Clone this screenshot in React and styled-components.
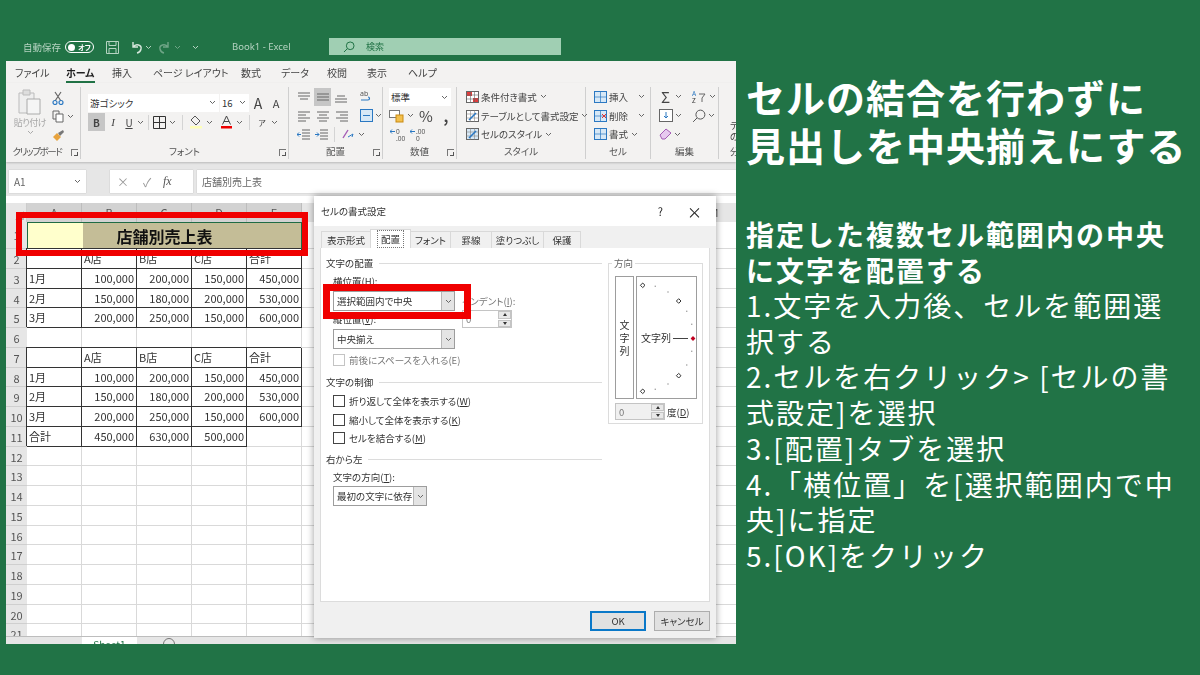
import styled, { createGlobalStyle } from "styled-components";

const GlobalStyle = createGlobalStyle`
  html, body { margin: 0; padding: 0; background: #217346; }
  body { font-family: "Noto Sans CJK JP", "Noto Sans", sans-serif; }
  * { box-sizing: border-box; }
`;

const Page = styled.div`
  width: 1200px;
  height: 675px;
  background: #217346;
  display: flex;
  align-items: flex-start;
  padding: 38px 0 0 6px;
  overflow: hidden;
`;

const ExcelWindow = styled.div`
  position: relative;
  width: 730px;
  height: 606px;
  flex: none;
  display: flex;
  flex-direction: column;
  overflow: hidden;
  font-feature-settings: "palt";
  color: #333;
  filter: blur(0.3px);
`;

/* title bar */
const TitleBar = styled.div`
  height: 23px;
  flex: none;
  display: flex;
  align-items: flex-start;
  padding-left: 17px;
  color: #b5d3c1;
  font-size: 9.5px;
  line-height: 18px;
`;

const QuickTools = styled.div`
  width: 209px;
  height: 18px;
  display: flex;
  align-items: center;
`;

const Toggle = styled.span`
  width: 29px;
  height: 12px;
  margin-left: 4px;
  border: 1px solid #fff;
  border-radius: 6px;
  display: flex;
  align-items: center;
  padding-left: 2px;
  color: #fff;
  font-size: 7px;
  line-height: 10px;
  font-weight: 700;
  &::before {
    content: "";
    width: 7px;
    height: 7px;
    border-radius: 50%;
    background: #fff;
    margin-right: 3px;
  }
`;

const BookName = styled.span`
  width: 97px;
  font-family: "Noto Sans", sans-serif;
  font-size: 9.5px;
`;

const SearchBox = styled.div`
  width: 232px;
  height: 17px;
  background: #a0cfb3;
  display: flex;
  align-items: center;
  padding-left: 14px;
  color: #217346;
  font-size: 9px;
  gap: 11px;
`;

/* ribbon tabs */
const RibbonTabs = styled.div`
  height: 22px;
  flex: none;
  background: #f3f2f1;
  display: flex;
  padding-left: 9px;
  font-size: 10px;
  line-height: 24px;
`;

const RibbonTab = styled.div`
  width: ${(p) => p.$w}px;
  flex: none;
  & > span {
    display: inline-block;
    height: 22px;
    color: ${(p) => (p.$on ? "#1f1f1f" : "#444")};
    font-weight: ${(p) => (p.$on ? 700 : 400)};
    border-bottom: ${(p) => (p.$on ? "2px solid #217346" : "none")};
  }
`;

/* ribbon */
const Ribbon = styled.div`
  height: 79px;
  flex: none;
  background: #f3f2f1;
  display: flex;
  padding: 4px 0 3px;
  box-shadow: 0 1px 2px rgba(0, 0, 0, 0.2);
  position: relative;
  overflow: hidden;
`;

const Group = styled.div`
  width: ${(p) => p.$w}px;
  flex: none;
  position: relative;
  display: flex;
  flex-direction: column;
  border-right: 1px solid ${(p) => (p.$last ? "transparent" : "#cfcfcf")};
`;

const GroupBody = styled.div`
  flex: 1;
  min-height: 0;
  display: flex;
  flex-direction: ${(p) => p.$dir || "column"};
  padding: ${(p) => p.$pad || "0"};
`;

const GroupLabel = styled.div`
  height: 15px;
  flex: none;
  text-align: center;
  font-size: 9.5px;
  line-height: 15px;
  color: #555;
  white-space: nowrap;
  padding-right: ${(p) => p.$right || 0}px;
  letter-spacing: ${(p) => p.$track || 0}px;
`;

const Launcher = styled.span`
  position: absolute;
  right: 2px;
  bottom: 3px;
  width: 7px;
  height: 7px;
  border-left: 1px solid #777;
  border-top: 1px solid #777;
  &::after {
    content: "";
    position: absolute;
    right: 0;
    bottom: 0;
    width: 3px;
    height: 3px;
    border-right: 1px solid #555;
    border-bottom: 1px solid #555;
  }
`;

const ToolRow = styled.div`
  height: ${(p) => p.$h || 19}px;
  display: flex;
  align-items: center;
  gap: ${(p) => p.$gap || 0}px;
  padding-left: ${(p) => p.$left || 0}px;
  font-size: 9.5px;
  white-space: nowrap;
  color: #444;
`;

const Spot = styled.span`
  width: ${(p) => p.$w || 17}px;
  height: ${(p) => p.$h || 18}px;
  flex: none;
  display: flex;
  align-items: center;
  justify-content: center;
  background: ${(p) => (p.$on ? "#c6c6c6" : "transparent")};
  font-size: ${(p) => p.$size || 10}px;
  font-weight: ${(p) => p.$weight || 400};
  font-style: ${(p) => (p.$italic ? "italic" : "normal")};
  text-decoration: ${(p) => (p.$under ? "underline" : "none")};
  color: ${(p) => p.$color || "#444"};
  font-family: ${(p) => (p.$latin ? '"Liberation Serif", serif' : "inherit")};
`;

const FieldBox = styled.div`
  width: ${(p) => p.$w}px;
  height: 18px;
  flex: none;
  margin-left: ${(p) => p.$ml || 0}px;
  background: #fff;
  display: flex;
  align-items: center;
  justify-content: space-between;
  padding: 0 3px 0 2px;
  font-size: 9.5px;
  color: #333;
`;

const PasteBlock = styled.div`
  width: 36px;
  margin-left: 6px;
  display: flex;
  flex-direction: column;
  align-items: center;
  color: #a6a6a6;
  font-size: 9px;
  line-height: 11px;
  padding-top: 2px;
  gap: 2px;
  white-space: nowrap;
  letter-spacing: -0.5px;
`;

const ClipTools = styled.div`
  display: flex;
  flex-direction: column;
  padding: 1px 0 0 4px;
`;

const Sep = styled.span`
  width: 1px;
  height: 15px;
  flex: none;
  background: #d4d4d4;
  margin: 0 ${(p) => p.$m || 3}px;
`;

const Gap = styled.span`
  width: ${(p) => p.$w}px;
  flex: none;
`;

const ClippedText = styled.div`
  padding: 33px 0 0 11px;
  flex: 1;
  font-size: 9.5px;
  line-height: 11px;
  color: #444;
`;

const ClippedLabel = styled.div`
  height: 15px;
  padding-left: 11px;
  font-size: 9.5px;
  line-height: 15px;
  color: #555;
`;

/* formula bar */
const FormulaBar = styled.div`
  height: 34px;
  flex: none;
  background: #e6e6e6;
  display: flex;
  gap: 4px;
  padding: 8px 0 3px 3px;
  font-size: 10px;
  color: #666;
`;

const FormulaBox = styled.div`
  width: ${(p) => p.$w || 0}px;
  flex: ${(p) => (p.$grow ? 1 : "none")};
  margin-left: ${(p) => p.$ml || 0}px;
  background: #fff;
  box-shadow: 0 0 1px rgba(0, 0, 0, 0.25);
  display: flex;
  align-items: center;
  justify-content: ${(p) => (p.$spread ? "space-between" : "flex-start")};
  gap: ${(p) => p.$gap || 0}px;
  padding: 0 5px;
`;

const FormulaMark = styled.span`
  color: #9a9a9a;
  font-size: 12px;
  width: ${(p) => p.$w || 16}px;
  text-align: center;
  flex: none;
`;

const FxMark = styled.span`
  font-style: italic;
  font-family: "Liberation Serif", serif;
  font-size: 12px;
  color: #555;
`;

/* sheet */
const SheetArea = styled.div`
  flex: 1;
  min-height: 0;
  background: #fff;
  padding-top: 7px;
  overflow: hidden;
`;

const SheetGrid = styled.div`
  display: grid;
  grid-template-columns: 21px repeat(13, 55px);
  grid-template-rows: 19px 27px repeat(21, 19.75px);
  font-size: 11px;
`;

const Corner = styled.div`
  background: #e6e6e6;
  border-right: 1px solid #ccc;
  display: flex;
  align-items: flex-end;
  justify-content: flex-end;
  padding: 2px;
  &::after {
    content: "";
    width: 0;
    height: 0;
    border-left: 9px solid transparent;
    border-bottom: 9px solid #b5b5b5;
  }
`;

const ColHead = styled.div`
  background: ${(p) => (p.$on ? "#d2d2d2" : "#e6e6e6")};
  border-right: 1px solid #bdbdbd;
  text-align: center;
  line-height: 19px;
  color: #555;
`;

const RowHead = styled.div`
  background: #e6e6e6;
  border-bottom: 1px solid #cfcfcf;
  text-align: center;
  color: #555;
  line-height: ${(p) => p.$line || 20}px;
`;

const Cell = styled.div`
  border-right: 1px solid ${(p) => (p.$box ? "#333" : "#d9d9d9")};
  border-bottom: 1px solid ${(p) => (p.$box ? "#333" : "#d9d9d9")};
  box-shadow: ${(p) => (p.$box ? "-1px -1px 0 #333" : "none")};
  padding: 0 2px;
  line-height: 19px;
  text-align: ${(p) => (p.$num ? "right" : "left")};
  color: #333;
  white-space: nowrap;
  overflow: hidden;
`;

const TitleCell = styled.div`
  grid-column: span 5;
  background: linear-gradient(90deg, #ffffcc 20%, #c4bd97 20%);
  border: 1px solid #1f6b44;
  display: flex;
  align-items: center;
  justify-content: center;
  font-size: 16px;
  font-weight: 700;
  color: #111;
`;

const SheetTabs = styled.div`
  height: 8px;
  flex: none;
  background: #e6e6e6;
  border-top: 1px solid #bdbdbd;
  display: flex;
  padding-left: 76px;
  overflow: hidden;
  font-size: 10px;
`;

const SheetTab = styled.div`
  width: 55px;
  height: 12px;
  background: #fff;
  text-align: center;
  line-height: 19px;
  color: #217346;
  margin-top: -2px;
`;

const AddSheet = styled.span`
  width: 12px;
  height: 12px;
  margin: 1px 0 0 26px;
  border: 1px solid #777;
  border-radius: 50%;
`;

const RedFrame = styled.div`
  position: absolute;
  left: ${(p) => p.$x}px;
  top: ${(p) => p.$y}px;
  width: ${(p) => p.$w}px;
  height: ${(p) => p.$h}px;
  border: ${(p) => p.$t || 6}px solid #f00000;
  pointer-events: none;
  z-index: 3;
`;

/* dialog */
const Dialog = styled.div`
  position: absolute;
  left: 308px;
  top: 158px;
  width: 402px;
  height: 442px;
  background: #f0f0f0;
  box-shadow: 0 0 7px rgba(0, 0, 0, 0.4);
  display: flex;
  flex-direction: column;
  font-size: 9.5px;
  color: #333;
  font-feature-settings: "palt";
  z-index: 2;
`;

const DialogTitle = styled.div`
  height: 30px;
  flex: none;
  background: #fff;
  display: flex;
  align-items: center;
  padding: 0 14px 0 7px;
  font-size: 9.5px;
  & > b {
    flex: 1;
    font-weight: 400;
  }
`;

const TitleButton = styled.span`
  margin-left: ${(p) => p.$ml || 0}px;
  font-size: ${(p) => p.$size || 11}px;
  color: #222;
`;

const DialogTabs = styled.div`
  height: 22px;
  flex: none;
  display: flex;
  align-items: flex-end;
  padding-left: 8px;
`;

const DialogTab = styled.div`
  width: ${(p) => p.$w}px;
  height: ${(p) => (p.$on ? 19 : 17)}px;
  flex: none;
  display: flex;
  align-items: center;
  justify-content: center;
  background: ${(p) => (p.$on ? "#fff" : "#f0f0f0")};
  border: 1px solid #d9d9d9;
  border-bottom: none;
  margin-left: -1px;
  white-space: nowrap;
  & > span {
    padding: 1px 3px;
    outline: ${(p) => (p.$on ? "1px dotted #777" : "none")};
  }
`;

const DialogPanel = styled.div`
  flex: 1;
  min-height: 0;
  margin: 0 6px;
  background: #fff;
  border: 1px solid #dcdcdc;
  border-top: none;
  display: flex;
  padding-left: 5px;
`;

const LeftColumn = styled.div`
  width: 276px;
  flex: none;
`;

const SectionTitle = styled.div`
  height: 16px;
  margin-top: ${(p) => p.$mt || 0}px;
  display: flex;
  align-items: center;
  gap: 6px;
  &::after {
    content: "";
    flex: 1;
    height: 1px;
    background: #dcdcdc;
  }
`;

const Indented = styled.div`
  padding-left: 7px;
`;

const FieldLabel = styled.div`
  height: 16px;
  line-height: 16px;
  margin-top: ${(p) => p.$mt || 0}px;
  color: ${(p) => (p.$dim ? "#777" : "#333")};
  white-space: nowrap;
`;

const SelectBox = styled.div`
  width: ${(p) => p.$w}px;
  height: 20px;
  margin-top: ${(p) => p.$mt || 0}px;
  background: #fff;
  border: 1px solid #9d9d9d;
  display: flex;
  align-items: center;
  justify-content: space-between;
  padding-left: 3px;
  font-size: 9.5px;
`;

const SelectArrow = styled.span`
  width: 13px;
  height: 18px;
  background: #e4e4e4;
  border-left: 1px solid #b8b8b8;
  display: flex;
  align-items: center;
  justify-content: center;
`;

const AlignRow = styled.div`
  display: flex;
  margin-top: 2px;
`;

const AlignSelects = styled.div`
  width: 129px;
  flex: none;
`;

const SpinBox = styled.div`
  width: ${(p) => p.$w}px;
  height: ${(p) => p.$h || 18}px;
  margin-top: ${(p) => p.$mt || 0}px;
  background: ${(p) => (p.$dim ? "#f0f0f0" : "#fff")};
  border: 1px solid #c4c4c4;
  display: flex;
  align-items: center;
  justify-content: space-between;
  padding-left: 3px;
  color: #777;
  flex: none;
`;

const SpinButtons = styled.span`
  width: 13px;
  height: 100%;
  display: flex;
  flex-direction: column;
  gap: 1px;
  & > i {
    flex: 1;
    background: #e8e8e8;
    border: 1px solid #c4c4c4;
    display: flex;
    align-items: center;
    justify-content: center;
    &::after {
      content: "";
      border-left: 2px solid transparent;
      border-right: 2px solid transparent;
      border-bottom: 3px solid #333;
    }
  }
  & > i + i::after {
    border-bottom: none;
    border-top: 3px solid #333;
  }
`;

const CheckRow = styled.div`
  height: 16px;
  margin-top: ${(p) => p.$mt || 2.5}px;
  display: flex;
  align-items: center;
  gap: 4px;
  color: ${(p) => (p.$dim ? "#777" : "#333")};
  white-space: nowrap;
  &::before {
    content: "";
    width: 10px;
    height: 10px;
    flex: none;
    background: #fff;
    border: 1px solid ${(p) => (p.$dim ? "#c4c4c4" : "#444")};
  }
`;

const OrientColumn = styled.div`
  width: 95px;
  height: 161px;
  margin: 15px 0 0 6px;
  border: 1px solid #dcdcdc;
  position: relative;
  padding: 12px 0 0 6px;
`;

const OrientLegend = styled.span`
  position: absolute;
  top: -7px;
  left: 3px;
  padding: 0 2px;
  background: #fff;
  line-height: 13px;
  color: #666;
`;

const OrientBoxes = styled.div`
  display: flex;
  gap: 2px;
`;

const VerticalBox = styled.div`
  width: 19px;
  height: 123px;
  border: 1px solid #9d9d9d;
  display: flex;
  align-items: center;
  justify-content: center;
  text-align: center;
  line-height: 13px;
  font-size: 10px;
`;

const DialBox = styled.div`
  width: 61px;
  height: 123px;
  border: 1px solid #9d9d9d;
  display: flex;
`;

const DegreeRow = styled.div`
  display: flex;
  align-items: center;
  gap: 2px;
  margin-top: 4px;
  white-space: nowrap;
`;

const DialogFooter = styled.div`
  height: 36px;
  flex: none;
  display: flex;
  justify-content: flex-end;
  gap: 8px;
  padding: 9px 6px 0 0;
`;

const DialogButton = styled.div`
  width: 56px;
  height: 20px;
  background: #e1e1e1;
  border: ${(p) => (p.$main ? "2px solid #0a78c8" : "1px solid #adadad")};
  display: flex;
  align-items: center;
  justify-content: center;
`;

/* right text */
const Notes = styled.div`
  width: 440px;
  margin-left: 10px;
  padding-top: 34px;
  color: #fff;
  flex: none;
`;

const Headline = styled.h1`
  margin: 0;
  font-size: 39px;
  letter-spacing: 1px;
  line-height: 48px;
  font-weight: 700;
  white-space: nowrap;
`;

const SubHead = styled.h2`
  margin: 48px 0 0;
  font-size: 28px;
  letter-spacing: 2px;
  line-height: 36px;
  font-weight: 700;
`;

const Step = styled.div`
  font-size: 28px;
  letter-spacing: 2px;
  line-height: 35.7px;
`;

/* icons */
const Chev = ({ c = "#666", ml = 0 }) => (
  <svg width="7" height="5" viewBox="0 0 7 5" style={{ marginLeft: ml, flex: "none" }}>
    <path d="M1 1l2.5 2.5L6 1" fill="none" stroke={c} strokeWidth="1" />
  </svg>
);

const Ico = ({ w = 14, h = 14, children, ml = 0 }) => (
  <svg width={w} height={h} viewBox={`0 0 ${w} ${h}`} style={{ flex: "none", marginLeft: ml }}>
    {children}
  </svg>
);

const Lines = ({ rows }) => (
  <Ico w={14} h={14}>
    {rows.map(([x1, x2, y], i) => (
      <path key={i} d={`M${x1} ${y}H${x2}`} stroke="#666" strokeWidth="1" />
    ))}
  </Ico>
);

const SaveIcon = () => (
  <Ico w={13} h={13} ml={12}>
    <path d="M.5.5h12v12H.5zM3 .5v4h7v-4M3 12.5v-5h7v5" fill="none" stroke="#b5d3c1" />
  </Ico>
);

const UndoIcon = ({ c, flip }) => (
  <svg width="14" height="13" viewBox="0 0 14 13" style={{ flex: "none", transform: flip ? "scaleX(-1)" : "none" }}>
    <path d="M4 1v5h5M4 6c3-4 9-2 8 2-.4 2-2 3.5-4 4" fill="none" stroke={c} strokeWidth="1.4" />
  </svg>
);

const PasteIcon = () => (
  <Ico w={24} h={26}>
    <path d="M1 4h15v20H1z" fill="#eee" stroke="#bbb" />
    <path d="M5 1h7v5H5z" fill="#ddd" stroke="#bbb" />
    <path d="M9 10h13v15H9z" fill="#f5f5f5" stroke="#aaa" />
  </Ico>
);

const ScissorsIcon = () => (
  <Ico w={12} h={14}>
    <path d="M3 1l6 9M9 1L3 10" stroke="#666" strokeWidth="1.2" fill="none" />
    <circle cx="3" cy="11.5" r="2" fill="none" stroke="#2b78c2" strokeWidth="1.2" />
    <circle cx="9" cy="11.5" r="2" fill="none" stroke="#2b78c2" strokeWidth="1.2" />
  </Ico>
);

const CopyIcon = () => (
  <Ico w={12} h={13}>
    <path d="M1 1h6v8H1z" fill="none" stroke="#666" />
    <path d="M4 4h7v8H4z" fill="#fff" stroke="#666" />
  </Ico>
);

const PainterIcon = () => (
  <Ico w={13} h={12}>
    <path d="M1 8l4-4 4 4-4 4z" fill="#e8a33d" />
    <path d="M6 4l5-3 1 2-4 4z" fill="#777" />
  </Ico>
);

const BorderIcon = () => (
  <Ico w={13} h={13}>
    <path d="M.5.5h12v12H.5zM6.5.5v12M.5 6.5h12" fill="none" stroke="#333" />
  </Ico>
);

const FillIcon = () => (
  <Ico w={14} h={14}>
    <path d="M6 1l5 5-4 4-5-5z" fill="none" stroke="#555" />
    <rect x="1" y="11" width="12" height="2.5" fill="#ffffb8" />
  </Ico>
);

const FontColorIcon = () => (
  <Ico w={13} h={14}>
    <path d="M2.5 9.5L6.5 1l4 8.5M4 6.5h5" fill="none" stroke="#444" />
    <rect x="1" y="11" width="11" height="2.5" fill="#e00" />
  </Ico>
);

const WrapIcon = () => (
  <Ico w={14} h={15}>
    <text x="2" y="7" fontSize="7" fill="#555" fontFamily="Noto Sans">ab</text>
    <path d="M3 11h7c2 0 2-3 0-3" fill="none" stroke="#2b78c2" strokeWidth="1.2" />
  </Ico>
);

const MergeIcon = () => (
  <Ico w={13} h={13}>
    <rect x=".5" y=".5" width="12" height="12" fill="#d7e8f6" stroke="#2b78c2" />
    <path d="M3 6.5h7" stroke="#2b78c2" />
  </Ico>
);

const IndentIcon = ({ rev }) => (
  <Ico w={13} h={13}>
    <path d="M5 2h8M5 5h8M5 8h8M5 11h8" stroke="#666" />
    <path d={rev ? "M4 6.5H0l2-2M0 6.5l2 2" : "M0 6.5h4l-2-2M4 6.5l-2 2"} fill="none" stroke="#2b78c2" />
  </Ico>
);

const OrientIcon = () => (
  <Ico w={14} h={13}>
    <path d="M2 10l5-8" stroke="#a35ab5" strokeWidth="1.4" />
    <path d="M7 9l5-3-1 3" fill="none" stroke="#2b78c2" />
  </Ico>
);

const TableMini = ({ accent, bg = "#fff" }) => (
  <Ico w={13} h={12}>
    <rect x=".5" y=".5" width="12" height="11" fill={bg} stroke="#666" />
    <path d="M.5 4h12M.5 8h12M4.5.5v11M8.5.5v11" stroke="#888" strokeWidth=".6" />
    <path d="M3 10l7-7" stroke={accent} strokeWidth="1.6" />
  </Ico>
);

const CondIcon = () => (
  <Ico w={13} h={12}>
    <rect x=".5" y=".5" width="12" height="11" fill="#fff" stroke="#666" />
    <rect x="1" y="1" width="5" height="4" fill="#e23b3b" />
    <rect x="7" y="7" width="5" height="4" fill="#e23b3b" />
    <path d="M.5 4h12M.5 8h12M4.5.5v11M8.5.5v11" stroke="#666" strokeWidth=".6" />
  </Ico>
);

const CellOp = ({ mark }) => (
  <Ico w={13} h={12}>
    <rect x=".5" y=".5" width="12" height="11" fill="#d7e8f6" stroke="#2b78c2" />
    <path d="M.5 6h12M6.5.5v11" stroke="#2b78c2" strokeWidth=".7" />
    {mark && <path d="M8 4l4 4M12 4l-4 4" stroke="#d33" />}
  </Ico>
);

const SearchIcon = ({ c = "#555", w = 12 }) => (
  <Ico w={w} h={w}>
    <circle cx={w * 0.6} cy={w * 0.4} r={w * 0.32} fill="none" stroke={c} />
    <path d={`M${w * 0.36} ${w * 0.64}L${w * 0.08} ${w * 0.92}`} stroke={c} />
  </Ico>
);

const EraserIcon = () => (
  <Ico w={13} h={12}>
    <path d="M1 7l6-6 5 4-6 6H3z" fill="#e7c9ef" stroke="#a35ab5" />
  </Ico>
);

const FillDownIcon = () => (
  <Ico w={14} h={13}>
    <rect x=".5" y=".5" width="13" height="12" fill="#fff" stroke="#666" />
    <path d="M7 3v6M5 7l2 2 2-2" fill="none" stroke="#2b78c2" />
  </Ico>
);

const SortIcon = () => (
  <Ico w={15} h={14}>
    <text x="1" y="6" fontSize="6.5" fill="#2b78c2" fontFamily="Noto Sans">A</text>
    <text x="1" y="13" fontSize="6.5" fill="#333" fontFamily="Noto Sans">Z</text>
    <path d="M8 4h6l-3 4v4" fill="none" stroke="#666" />
  </Ico>
);

const DecimalIcon = ({ a, b }) => (
  <Ico w={16} h={14}>
    <text x="6" y="6" fontSize="6.5" fill="#555" fontFamily="Noto Sans">{a}</text>
    <text x="6" y="13" fontSize="6.5" fill="#555" fontFamily="Noto Sans">{b}</text>
    <path d="M0 3.5h5M0 3.5l2-2M0 3.5l2 2" fill="none" stroke="#2b78c2" />
  </Ico>
);

const CurrencyIcon = () => (
  <Ico w={15} h={14}>
    <rect x=".5" y="1.5" width="10" height="7" fill="#fff" stroke="#777" />
    <rect x="7" y="6" width="7" height="7" fill="#f3c04d" stroke="#c98a12" />
  </Ico>
);

const DialGraphic = () => {
  const diamonds = [[5.7, 8.3], [41.7, 24], [41.7, 98.7], [5.7, 114.3]];
  const dots = [[18.3, 9.3], [31, 15], [49.7, 34.3], [54.7, 47.3], [54.7, 74.3], [49.7, 88], [31, 107], [18.3, 112.3]];
  return (
    <svg width="59" height="121" viewBox="0 0 59 121">
      {dots.map(([x, y]) => (
        <rect key={`${x}-${y}`} x={x - 0.7} y={y - 0.7} width="1.4" height="1.4" fill="#aaa" />
      ))}
      {diamonds.map(([x, y]) => (
        <path key={`${x}-${y}`} d={`M${x} ${y - 2.3}l2.3 2.3-2.3 2.3-2.3-2.3z`} fill="#fff" stroke="#333" />
      ))}
      <path d="M36 61.5h15" stroke="#444" />
      <path d="M56 59l2.4 2.5-2.4 2.5-2.4-2.5z" fill="#c00020" />
      <text x="4" y="65" fontSize="10" fill="#333" fontFamily="Noto Sans CJK JP">文字列</text>
    </svg>
  );
};

/* data */
const ribbonTabs = [
  ["ファイル", 51],
  ["ホーム", 46, true],
  ["挿入", 41],
  ["ページ レイアウト", 88],
  ["数式", 40],
  ["データ", 46],
  ["校閲", 40],
  ["表示", 41],
  ["ヘルプ", 40],
];

const columns = ["A", "B", "C", "D", "E", "F", "G", "H", "I", "J", "K", "L", "M"];
const yen = (n) => n.toLocaleString("en-US");

const header = ["", "A店", "B店", "C店", "合計"];
const months = [
  ["1月", 100000, 200000, 150000, 450000],
  ["2月", 150000, 180000, 200000, 530000],
  ["3月", 200000, 250000, 150000, 600000],
];
const total = ["合計", 450000, 630000, 500000, ""];

const sheetRows = [
  { n: 2, cells: header },
  { n: 3, cells: months[0] },
  { n: 4, cells: months[1] },
  { n: 5, cells: months[2] },
  { n: 6 },
  { n: 7, cells: header },
  { n: 8, cells: months[0] },
  { n: 9, cells: months[1] },
  { n: 10, cells: months[2] },
  { n: 11, cells: total, open: true },
  ...Array.from({ length: 11 }, (_, i) => ({ n: 12 + i })),
];

const dialogTabs = [
  ["表示形式", 50],
  ["配置", 41, true],
  ["フォント", 41],
  ["罫線", 42],
  ["塗りつぶし", 53],
  ["保護", 38],
];

function SheetRow({ row }) {
  return (
    <>
      <RowHead>{row.n}</RowHead>
      {columns.map((col, i) => {
        const value = row.cells ? row.cells[i] : undefined;
        const boxed = row.cells && i < 5 && !(row.open && i === 4);
        const isNum = typeof value === "number";
        return (
          <Cell key={col} $box={boxed} $num={isNum}>
            {isNum ? yen(value) : value}
          </Cell>
        );
      })}
    </>
  );
}

function CellFormat() {
  return (
    <Dialog>
      <DialogTitle>
        <b>セルの書式設定</b>
        <TitleButton>?</TitleButton>
        <TitleButton $ml={24} $size={15}>×</TitleButton>
      </DialogTitle>
      <DialogTabs>
        {dialogTabs.map(([label, w, on]) => (
          <DialogTab key={label} $w={w} $on={on}>
            <span>{label}</span>
          </DialogTab>
        ))}
      </DialogTabs>
      <DialogPanel>
        <LeftColumn>
          <SectionTitle $mt={7}>文字の配置</SectionTitle>
          <Indented>
            <FieldLabel $mt={2}>横位置(<u>H</u>):</FieldLabel>
            <AlignRow>
              <AlignSelects>
                <SelectBox $w={122}>
                  選択範囲内で中央
                  <SelectArrow><Chev /></SelectArrow>
                </SelectBox>
                <FieldLabel>縦位置(<u>V</u>):</FieldLabel>
                <SelectBox $w={122} $mt={2}>
                  中央揃え
                  <SelectArrow><Chev /></SelectArrow>
                </SelectBox>
                <CheckRow $dim $mt={3}><span>前後にスペースを入れる(E)</span></CheckRow>
              </AlignSelects>
              <div>
                <FieldLabel $mt={2} $dim>インデント(<u>I</u>):</FieldLabel>
                <SpinBox $w={50} $mt={1}>
                  0
                  <SpinButtons><i /><i /></SpinButtons>
                </SpinBox>
              </div>
            </AlignRow>
          </Indented>
          <SectionTitle $mt={6}>文字の制御</SectionTitle>
          <Indented>
            <CheckRow $mt={3}><span>折り返して全体を表示する(<u>W</u>)</span></CheckRow>
            <CheckRow><span>縮小して全体を表示する(<u>K</u>)</span></CheckRow>
            <CheckRow><span>セルを結合する(<u>M</u>)</span></CheckRow>
          </Indented>
          <SectionTitle $mt={5}>右から左</SectionTitle>
          <Indented>
            <FieldLabel $mt={2}>文字の方向(<u>T</u>):</FieldLabel>
            <SelectBox $w={94} $mt={1}>
              最初の文字に依存
              <SelectArrow><Chev /></SelectArrow>
            </SelectBox>
          </Indented>
        </LeftColumn>
        <OrientColumn>
          <OrientLegend>方向</OrientLegend>
          <OrientBoxes>
            <VerticalBox>文<br />字<br />列</VerticalBox>
            <DialBox><DialGraphic /></DialBox>
          </OrientBoxes>
          <DegreeRow>
            <SpinBox $w={50} $h={17} $dim>
              0
              <SpinButtons><i /><i /></SpinButtons>
            </SpinBox>
            <span>度(<u>D</u>)</span>
          </DegreeRow>
        </OrientColumn>
      </DialogPanel>
      <DialogFooter>
        <DialogButton $main>OK</DialogButton>
        <DialogButton>キャンセル</DialogButton>
      </DialogFooter>
    </Dialog>
  );
}

export default function App() {
  return (
    <Page>
      <GlobalStyle />
      <ExcelWindow>
        <TitleBar>
          <QuickTools>
            自動保存
            <Toggle>オフ</Toggle>
            <SaveIcon />
            <Gap $w={10} />
            <UndoIcon c="#d6e7dc" />
            <Chev c="#b5d3c1" ml={2} />
            <Gap $w={6} />
            <UndoIcon c="#6fa587" flip />
            <Chev c="#6fa587" ml={2} />
            <Gap $w={11} />
            <Chev c="#b5d3c1" />
          </QuickTools>
          <BookName>Book1 - Excel</BookName>
          <SearchBox>
            <SearchIcon c="#217346" />
            検索
          </SearchBox>
        </TitleBar>

        <RibbonTabs>
          {ribbonTabs.map(([label, w, on]) => (
            <RibbonTab key={label} $w={w} $on={on}>
              <span>{label}</span>
            </RibbonTab>
          ))}
        </RibbonTabs>

        <Ribbon>
          <Group $w={75}>
            <GroupBody $dir="row">
              <PasteBlock>
                <PasteIcon />
                貼り付け
                <Chev c="#aaa" />
              </PasteBlock>
              <ClipTools>
                <ToolRow $h={19}><ScissorsIcon /></ToolRow>
                <ToolRow $h={19}><CopyIcon /><Chev ml={3} /></ToolRow>
                <ToolRow $h={18}><PainterIcon /></ToolRow>
              </ClipTools>
            </GroupBody>
            <GroupLabel $right={12} $track={-1.4}>クリップボード</GroupLabel>
            <Launcher />
          </Group>

          <Group $w={208}>
            <GroupBody $pad="6px 0 0 7px">
              <ToolRow $h={19}>
                <FieldBox $w={131}>游ゴシック<Chev /></FieldBox>
                <FieldBox $w={29} $ml={1}>16<Chev /></FieldBox>
                <Spot $w={18} $size={14}>A</Spot>
                <Spot $w={18} $size={11}>A</Spot>
              </ToolRow>
              <ToolRow $h={20}>
                <Spot $on $weight={700} $size={10}>B</Spot>
                <Spot $w={16} $italic $latin $size={11}>I</Spot>
                <Spot $w={16} $under $size={10}>U</Spot>
                <Chev />
                <Sep $m={4} />
                <BorderIcon />
                <Chev ml={3} />
                <Sep $m={6} />
                <FillIcon />
                <Chev ml={3} />
                <Gap $w={7} />
                <FontColorIcon />
                <Chev ml={3} />
                <Sep $m={6} />
                <Spot $w={12} $size={8}>ア</Spot>
                <Chev ml={3} />
              </ToolRow>
            </GroupBody>
            <GroupLabel>フォント</GroupLabel>
            <Launcher />
          </Group>

          <Group $w={94}>
            <GroupBody $pad="0 0 0 8px">
              <ToolRow $gap={3}>
                <Lines rows={[[1, 13, 3], [1, 13, 6], [3, 11, 9]]} />
                <Spot $on $w={17}><Lines rows={[[1, 13, 4], [1, 13, 7], [1, 13, 10]]} /></Spot>
                <Lines rows={[[3, 11, 6], [1, 13, 9], [1, 13, 12]]} />
                <Gap $w={4} />
                <WrapIcon />
              </ToolRow>
              <ToolRow $gap={5}>
                <Lines rows={[[1, 13, 3], [1, 9, 6], [1, 13, 9], [1, 9, 12]]} />
                <Lines rows={[[1, 13, 3], [3, 11, 6], [1, 13, 9], [3, 11, 12]]} />
                <Lines rows={[[1, 13, 3], [5, 13, 6], [1, 13, 9], [5, 13, 12]]} />
                <Gap $w={1} />
                <MergeIcon />
                <Chev ml={-3} />
              </ToolRow>
              <ToolRow $gap={5}>
                <IndentIcon rev />
                <IndentIcon />
                <Sep $m={1} />
                <OrientIcon />
                <Chev ml={-2} />
              </ToolRow>
            </GroupBody>
            <GroupLabel>配置</GroupLabel>
            <Launcher />
          </Group>

          <Group $w={74}>
            <GroupBody $pad="1px 0 0 6px">
              <ToolRow $h={18}>
                <FieldBox $w={62}>標準<Chev /></FieldBox>
              </ToolRow>
              <ToolRow>
                <CurrencyIcon />
                <Chev ml={3} />
                <Spot $w={24} $size={15}>%</Spot>
                <Spot $w={16} $size={15} $weight={700}>,</Spot>
              </ToolRow>
              <ToolRow $gap={4} $left={1}>
                <DecimalIcon a="0" b=".00" />
                <DecimalIcon a=".00" b="0" />
              </ToolRow>
            </GroupBody>
            <GroupLabel>数値</GroupLabel>
            <Launcher />
          </Group>

          <Group $w={129}>
            <GroupBody $pad="0 0 0 9px">
              <ToolRow $gap={2}><CondIcon />条件付き書式<Chev ml={1} /></ToolRow>
              <ToolRow $gap={2}><TableMini accent="#2b78c2" />テーブルとして書式設定<Chev ml={1} /></ToolRow>
              <ToolRow $gap={2} $h={18}><TableMini accent="#2b78c2" bg="#d7e8f6" />セルのスタイル<Chev ml={1} /></ToolRow>
            </GroupBody>
            <GroupLabel>スタイル</GroupLabel>
          </Group>

          <Group $w={65}>
            <GroupBody $pad="0 0 0 8px">
              <ToolRow $gap={2}><CellOp />挿入<Chev ml={8} /></ToolRow>
              <ToolRow $gap={2}><CellOp mark />削除<Chev ml={8} /></ToolRow>
              <ToolRow $gap={2} $h={18}><CellOp />書式<Chev ml={1} /></ToolRow>
            </GroupBody>
            <GroupLabel>セル</GroupLabel>
          </Group>

          <Group $w={68}>
            <GroupBody $pad="0 0 0 8px">
              <ToolRow $gap={3}>
                <Spot $w={13} $size={15}>Σ</Spot>
                <Chev />
                <Gap $w={3} />
                <SortIcon />
                <Chev />
              </ToolRow>
              <ToolRow $gap={2}>
                <FillDownIcon />
                <Chev />
                <Gap $w={6} />
                <SearchIcon w={14} />
                <Chev />
              </ToolRow>
              <ToolRow $gap={2} $h={18}>
                <EraserIcon />
                <Chev />
              </ToolRow>
            </GroupBody>
            <GroupLabel>編集</GroupLabel>
          </Group>

          <Group $w={20} $last>
            <ClippedText>デ<br />の</ClippedText>
            <ClippedLabel>分</ClippedLabel>
          </Group>
        </Ribbon>

        <FormulaBar>
          <FormulaBox $w={77} $spread>
            A1
            <Chev />
          </FormulaBox>
          <FormulaBox $w={83} $ml={20} $gap={8}>
            <FormulaMark>×</FormulaMark>
            <FormulaMark>✓</FormulaMark>
            <FxMark>fx</FxMark>
          </FormulaBox>
          <FormulaBox $grow>店舗別売上表</FormulaBox>
        </FormulaBar>

        <SheetArea>
          <SheetGrid>
            <Corner />
            {columns.map((col, i) => (
              <ColHead key={col} $on={i < 5}>{col}</ColHead>
            ))}
            <RowHead $line={27}>1</RowHead>
            <TitleCell>店舗別売上表</TitleCell>
            {columns.slice(5).map((col) => (
              <Cell key={col} />
            ))}
            {sheetRows.map((row) => (
              <SheetRow key={row.n} row={row} />
            ))}
          </SheetGrid>
        </SheetArea>

        <SheetTabs>
          <SheetTab>Sheet1</SheetTab>
          <AddSheet />
        </SheetTabs>

        <RedFrame $x={10} $y={174} $w={292} $h={44} />
        <CellFormat />
        <RedFrame $x={317} $y={246} $w={148} $h={35} $t={7} />
      </ExcelWindow>

      <Notes>
        <Headline>
          セルの結合を行わずに
          <br />
          見出しを中央揃えにする
        </Headline>
        <SubHead>指定した複数セル範囲内の中央に文字を配置する</SubHead>
        <Step>1.文字を入力後、セルを範囲選択する</Step>
        <Step>2.セルを右クリック&gt; [セルの書式設定]を選択</Step>
        <Step>3.[配置]タブを選択</Step>
        <Step>4.「横位置」を[選択範囲内で中央]に指定</Step>
        <Step>5.[OK]をクリック</Step>
      </Notes>
    </Page>
  );
}
